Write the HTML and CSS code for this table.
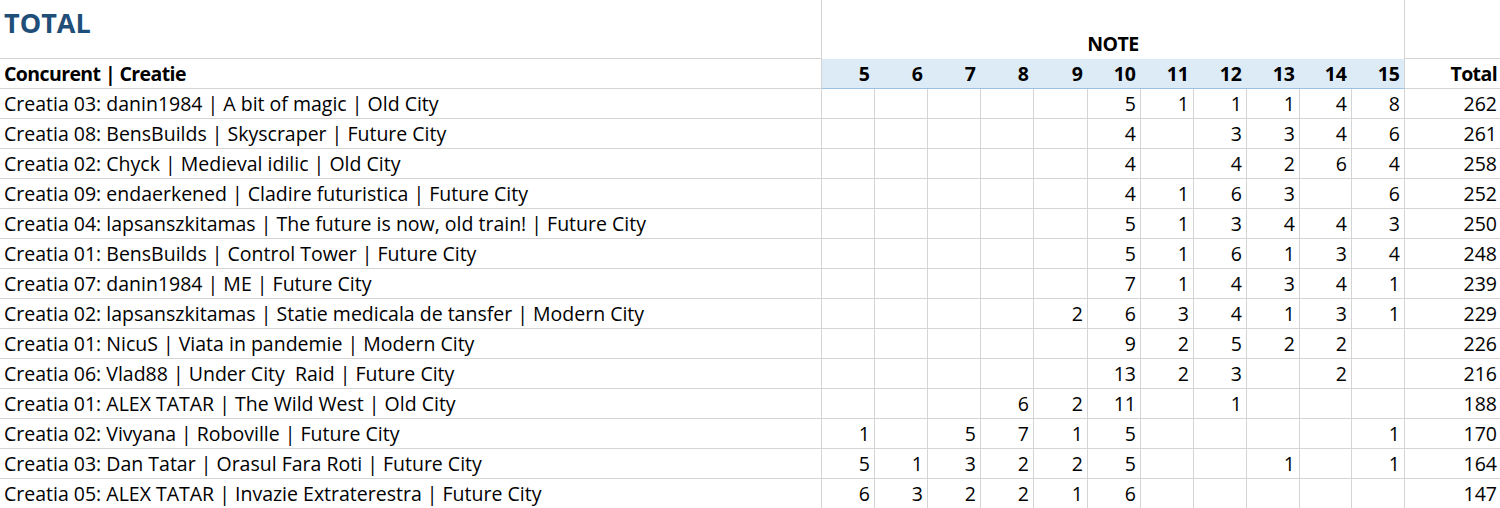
FILE: index.html
```html
<!DOCTYPE html>
<html lang="ro">
<head>
<meta charset="utf-8">
<title>TOTAL</title>
<link rel="stylesheet" href="styles.css">
</head>
<body>
<div class="sheet">
  <div class="c title-cell"><span class="title">TOTAL</span></div>
  <div class="c note-cell">NOTE</div>
  <div class="c blank-top"></div>

  <div class="c name head">Concurent | Creatie</div>
  <div class="c hnum">5</div><div class="c hnum">6</div><div class="c hnum">7</div><div class="c hnum">8</div><div class="c hnum">9</div><div class="c hnum">10</div><div class="c hnum">11</div><div class="c hnum">12</div><div class="c hnum">13</div><div class="c hnum">14</div><div class="c hnum last">15</div>
  <div class="c tot head">Total</div>

  <div class="c name">Creatia 03: danin1984 | A bit of magic | Old City</div>
  <div class="c n"></div><div class="c n"></div><div class="c n"></div><div class="c n"></div><div class="c n"></div><div class="c n">5</div><div class="c n">1</div><div class="c n">1</div><div class="c n">1</div><div class="c n">4</div><div class="c n">8</div><div class="c tot">262</div>

  <div class="c name">Creatia 08: BensBuilds | Skyscraper | Future City</div>
  <div class="c n"></div><div class="c n"></div><div class="c n"></div><div class="c n"></div><div class="c n"></div><div class="c n">4</div><div class="c n"></div><div class="c n">3</div><div class="c n">3</div><div class="c n">4</div><div class="c n">6</div><div class="c tot">261</div>

  <div class="c name">Creatia 02: Chyck | Medieval idilic | Old City</div>
  <div class="c n"></div><div class="c n"></div><div class="c n"></div><div class="c n"></div><div class="c n"></div><div class="c n">4</div><div class="c n"></div><div class="c n">4</div><div class="c n">2</div><div class="c n">6</div><div class="c n">4</div><div class="c tot">258</div>

  <div class="c name">Creatia 09: endaerkened | Cladire futuristica | Future City</div>
  <div class="c n"></div><div class="c n"></div><div class="c n"></div><div class="c n"></div><div class="c n"></div><div class="c n">4</div><div class="c n">1</div><div class="c n">6</div><div class="c n">3</div><div class="c n"></div><div class="c n">6</div><div class="c tot">252</div>

  <div class="c name">Creatia 04: lapsanszkitamas | The future is now, old train! | Future City</div>
  <div class="c n"></div><div class="c n"></div><div class="c n"></div><div class="c n"></div><div class="c n"></div><div class="c n">5</div><div class="c n">1</div><div class="c n">3</div><div class="c n">4</div><div class="c n">4</div><div class="c n">3</div><div class="c tot">250</div>

  <div class="c name">Creatia 01: BensBuilds | Control Tower | Future City</div>
  <div class="c n"></div><div class="c n"></div><div class="c n"></div><div class="c n"></div><div class="c n"></div><div class="c n">5</div><div class="c n">1</div><div class="c n">6</div><div class="c n">1</div><div class="c n">3</div><div class="c n">4</div><div class="c tot">248</div>

  <div class="c name">Creatia 07: danin1984 | ME | Future City</div>
  <div class="c n"></div><div class="c n"></div><div class="c n"></div><div class="c n"></div><div class="c n"></div><div class="c n">7</div><div class="c n">1</div><div class="c n">4</div><div class="c n">3</div><div class="c n">4</div><div class="c n">1</div><div class="c tot">239</div>

  <div class="c name">Creatia 02: lapsanszkitamas | Statie medicala de tansfer | Modern City</div>
  <div class="c n"></div><div class="c n"></div><div class="c n"></div><div class="c n"></div><div class="c n">2</div><div class="c n">6</div><div class="c n">3</div><div class="c n">4</div><div class="c n">1</div><div class="c n">3</div><div class="c n">1</div><div class="c tot">229</div>

  <div class="c name">Creatia 01: NicuS | Viata in pandemie | Modern City</div>
  <div class="c n"></div><div class="c n"></div><div class="c n"></div><div class="c n"></div><div class="c n"></div><div class="c n">9</div><div class="c n">2</div><div class="c n">5</div><div class="c n">2</div><div class="c n">2</div><div class="c n"></div><div class="c tot">226</div>

  <div class="c name">Creatia 06: Vlad88 | Under City  Raid | Future City</div>
  <div class="c n"></div><div class="c n"></div><div class="c n"></div><div class="c n"></div><div class="c n"></div><div class="c n">13</div><div class="c n">2</div><div class="c n">3</div><div class="c n"></div><div class="c n">2</div><div class="c n"></div><div class="c tot">216</div>

  <div class="c name">Creatia 01: ALEX TATAR | The Wild West | Old City</div>
  <div class="c n"></div><div class="c n"></div><div class="c n"></div><div class="c n">6</div><div class="c n">2</div><div class="c n">11</div><div class="c n"></div><div class="c n">1</div><div class="c n"></div><div class="c n"></div><div class="c n"></div><div class="c tot">188</div>

  <div class="c name">Creatia 02: Vivyana | Roboville | Future City</div>
  <div class="c n">1</div><div class="c n"></div><div class="c n">5</div><div class="c n">7</div><div class="c n">1</div><div class="c n">5</div><div class="c n"></div><div class="c n"></div><div class="c n"></div><div class="c n"></div><div class="c n">1</div><div class="c tot">170</div>

  <div class="c name">Creatia 03: Dan Tatar | Orasul Fara Roti | Future City</div>
  <div class="c n">5</div><div class="c n">1</div><div class="c n">3</div><div class="c n">2</div><div class="c n">2</div><div class="c n">5</div><div class="c n"></div><div class="c n"></div><div class="c n">1</div><div class="c n"></div><div class="c n">1</div><div class="c tot">164</div>

  <div class="c name">Creatia 05: ALEX TATAR | Invazie Extraterestra | Future City</div>
  <div class="c n">6</div><div class="c n">3</div><div class="c n">2</div><div class="c n">2</div><div class="c n">1</div><div class="c n">6</div><div class="c n"></div><div class="c n"></div><div class="c n"></div><div class="c n"></div><div class="c n"></div><div class="c tot">147</div>
</div>
</body>
</html>
```

FILE: styles.css
```css
html, body {
  margin: 0;
  padding: 0;
  background: #ffffff;
}

body {
  font-family: "Open Sans", "Liberation Sans", sans-serif;
  font-size: 19.5px;
  color: #000000;
  overflow: hidden;
}

.sheet {
  display: grid;
  grid-template-columns: 822px 53px 53px 53px 53px 54px 53px 53px 53px 53px 52px 53px 95px;
  grid-template-rows: 59px repeat(15, 30px);
  width: 1500px;
}

.c {
  box-sizing: border-box;
  border-right: 1px solid #d4d4d4;
  border-bottom: 1px solid #d4d4d4;
  line-height: 26px;
  white-space: pre;
  overflow: hidden;
  display: flex;
  align-items: flex-end;
  padding-bottom: 1px;
}

.title-cell {
  align-items: flex-start;
  padding: 5px 0 0 4px;
}

.title {
  font-size: 27px;
  font-weight: 700;
  color: #1f4e79;
  line-height: 36px;
}

.note-cell {
  grid-column: 2 / span 11;
  justify-content: center;
  font-weight: 700;
  letter-spacing: -0.5px;
  border-bottom: none;
  padding-bottom: 2px;
}

.blank-top {
  border-right: none;
}

.name {
  padding-left: 4px;
}

.head {
  font-weight: 700;
  letter-spacing: -0.6px;
}

.hnum {
  background: #ddebf7;
  border-right: none;
  border-bottom: 1px solid #9bc2e6;
  justify-content: flex-end;
  padding-right: 5px;
  font-weight: 700;
}

.hnum.last {
  border-right: 1px solid #d4d4d4;
  padding-right: 4px;
}

.n {
  justify-content: flex-end;
  padding-right: 4px;
}

.tot {
  justify-content: flex-end;
  padding-right: 3px;
  border-right: none;
}
```
